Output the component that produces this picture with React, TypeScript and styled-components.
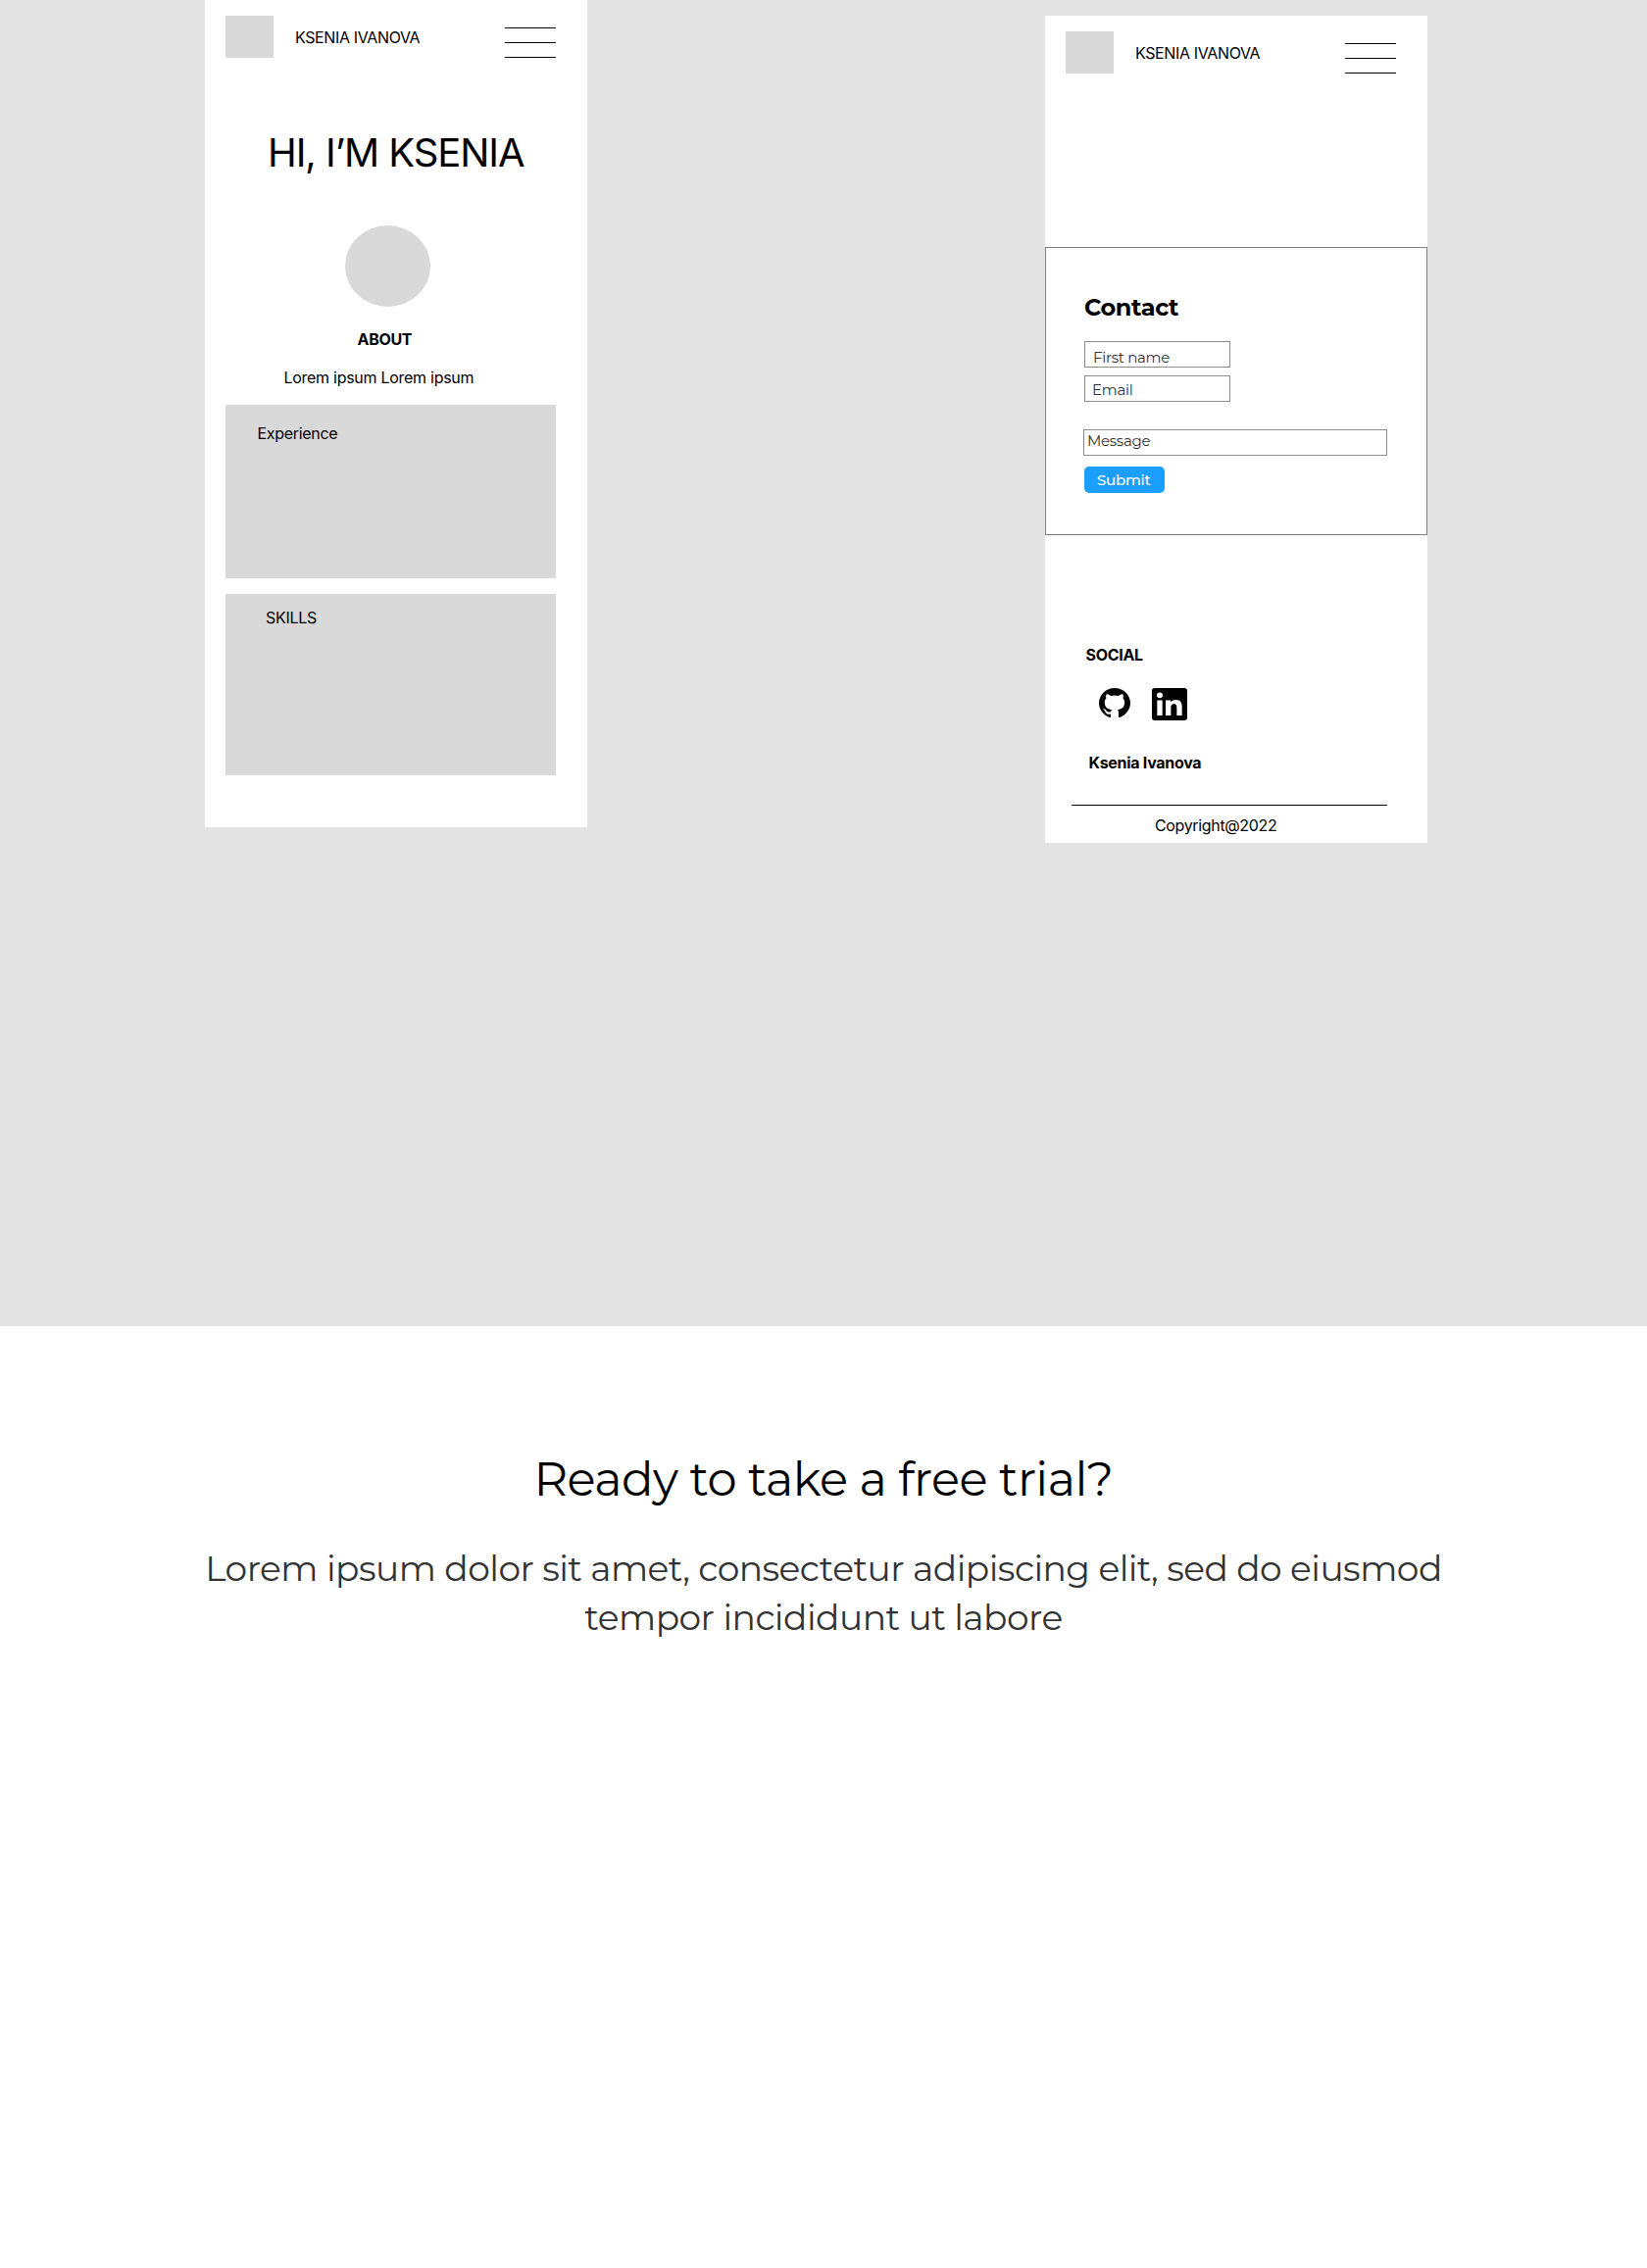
import React from "react";
import styled, { createGlobalStyle } from "styled-components";

const montserrat = `Montserrat, Inter, "Liberation Sans", sans-serif`;

const GlobalStyle = createGlobalStyle`
  *, *::before, *::after { box-sizing: border-box; }
  body {
    margin: 0;
    background: #ffffff;
    color: #000000;
    font-family: Inter, "Liberation Sans", sans-serif;
  }
  h1, h2, h3, p { margin: 0; font-weight: 400; }
`;

const Page = styled.main`
  width: 1680px;
  height: 2314px;
  display: flex;
  flex-direction: column;
  overflow: hidden;
`;

const Canvas = styled.section`
  display: flex;
  justify-content: space-between;
  align-items: flex-start;
  height: 1353px;
  padding: 0 224px 0 209px;
  background: #e4e4e4;
`;

const Board = styled.article<{ $top?: number }>`
  display: flex;
  flex-direction: column;
  align-items: flex-start;
  width: 390px;
  height: 844px;
  margin-top: ${(p) => p.$top ?? 0}px;
  background: #ffffff;
`;

const Header = styled.header`
  display: flex;
  align-items: flex-start;
  width: 100%;
  height: 59px;
  padding: 16px 32px 0 21px;
`;

const Logo = styled.div`
  width: 49px;
  height: 43px;
  background: #d9d9d9;
`;

const Burger = styled.div`
  display: flex;
  flex-direction: column;
  gap: 14px;
  width: 52px;
  margin: 12px 0 0 auto;
`;

const Bar = styled.span`
  height: 1px;
  background: #000000;
`;

const Text = styled.p<{ $top?: number; $left?: number; $bold?: boolean; $track?: number }>`
  margin: ${(p) => p.$top ?? 0}px 0 0 ${(p) => p.$left ?? 0}px;
  font-size: 16px;
  line-height: 19px;
  font-weight: ${(p) => (p.$bold ? 700 : 400)};
  letter-spacing: ${(p) => p.$track ?? -0.3}px;
  white-space: nowrap;
`;

const Title = styled.h1`
  margin: 73px 0 0 64px;
  font-size: 40px;
  line-height: 48px;
  letter-spacing: -1.07px;
  white-space: nowrap;
`;

const Portrait = styled.div`
  width: 87px;
  height: 83px;
  margin: 50px 0 0 143px;
  border-radius: 50%;
  background: #d9d9d9;
`;

const Panel = styled.section<{ $top: number; $height: number }>`
  display: flex;
  align-items: flex-start;
  width: 337px;
  height: ${(p) => p.$height}px;
  margin: ${(p) => p.$top}px 0 0 21px;
  background: #d9d9d9;
`;

const ContactBox = styled.form`
  display: flex;
  flex-direction: column;
  align-items: flex-start;
  width: 390px;
  height: 294px;
  margin-top: 177px;
  padding: 46px 0 0 39px;
  border: 1px solid #808080;
  font-family: ${montserrat};
`;

const ContactTitle = styled.h2`
  height: 29px;
  font-size: 24px;
  line-height: 29px;
  font-weight: 700;
  letter-spacing: -0.4px;
`;

const Field = styled.label<{ $top: number; $wide?: boolean; $x: number; $y: number }>`
  width: ${(p) => (p.$wide ? 310 : 149)}px;
  height: 27px;
  margin: ${(p) => p.$top}px 0 0 ${(p) => (p.$wide ? -1 : 0)}px;
  padding: ${(p) => p.$y}px 0 0 ${(p) => p.$x}px;
  border: 1px solid #8c8c8c;
  font-size: 15px;
  line-height: 19px;
  letter-spacing: -0.28px;
  color: #333333;
`;

const Submit = styled.button`
  width: 82px;
  height: 27px;
  margin: 11px 0 0;
  padding: 4px 0 4px 13px;
  border: 0;
  border-radius: 5px;
  background: #1a9fff;
  color: #ffffff;
  font: 500 15px/19px ${montserrat};
  letter-spacing: -0.24px;
  text-align: left;
`;

const Social = styled.div`
  display: flex;
  gap: 22px;
  margin: 24px 0 0 55px;
  height: 33px;
`;

const Rule = styled.hr`
  width: 322px;
  height: 1px;
  margin: 33px 0 0 27px;
  border: 0;
  background: #000000;
`;

const Trial = styled.section`
  display: flex;
  flex-direction: column;
  align-items: center;
  padding-top: 127px;
  font-family: ${montserrat};
  text-align: center;
`;

const TrialTitle = styled.h2`
  font-size: 48px;
  line-height: 58px;
  letter-spacing: -0.54px;
`;

const TrialText = styled.p`
  max-width: 1300px;
  margin-top: 37px;
  font-size: 36px;
  line-height: 50px;
  letter-spacing: -0.52px;
  color: #333333;
`;

const GithubIcon = () => (
  <svg width="32" height="30" viewBox="0 0.297 24 23.42" preserveAspectRatio="none" aria-label="GitHub">
    <path d="M12 .297c-6.63 0-12 5.373-12 12 0 5.303 3.438 9.8 8.205 11.385.6.113.82-.258.82-.577 0-.285-.01-1.04-.015-2.04-3.338.724-4.042-1.61-4.042-1.61C4.422 18.07 3.633 17.7 3.633 17.7c-1.087-.744.084-.729.084-.729 1.205.084 1.838 1.236 1.838 1.236 1.07 1.835 2.809 1.305 3.495.998.108-.776.417-1.305.76-1.605-2.665-.3-5.466-1.332-5.466-5.93 0-1.31.465-2.38 1.235-3.22-.135-.303-.54-1.523.105-3.176 0 0 1.005-.322 3.3 1.23.96-.267 1.98-.399 3-.405 1.02.006 2.04.138 3 .405 2.28-1.552 3.285-1.23 3.285-1.23.645 1.653.24 2.873.12 3.176.765.84 1.23 1.91 1.23 3.22 0 4.61-2.805 5.625-5.475 5.92.42.36.81 1.096.81 2.22 0 1.606-.015 2.896-.015 3.286 0 .315.21.69.825.57C20.565 22.092 24 17.592 24 12.297c0-6.627-5.373-12-12-12" />
  </svg>
);

const LinkedinIcon = () => (
  <svg width="36" height="33" viewBox="0 0 24 24" preserveAspectRatio="none" aria-label="LinkedIn">
    <path d="M20.447 20.452h-3.554v-5.569c0-1.328-.027-3.037-1.852-3.037-1.853 0-2.136 1.445-2.136 2.939v5.667H9.351V9h3.414v1.561h.046c.477-.9 1.637-1.85 3.37-1.85 3.601 0 4.267 2.37 4.267 5.455v6.286zM5.337 7.433c-1.144 0-2.063-.926-2.063-2.065 0-1.138.92-2.063 2.063-2.063 1.14 0 2.064.925 2.064 2.063 0 1.139-.925 2.065-2.064 2.065zm1.782 13.019H3.555V9h3.564v11.452zM22.225 0H1.771C.792 0 0 .774 0 1.729v20.542C0 23.227.792 24 1.771 24h20.451C23.2 24 24 23.227 24 22.271V1.729C24 .774 23.2 0 22.222 0h.003z" />
  </svg>
);

const BoardHeader = () => (
  <Header>
    <Logo />
    <Text $top={13} $left={22} $track={-0.37}>KSENIA IVANOVA</Text>
    <Burger>
      <Bar />
      <Bar />
      <Bar />
    </Burger>
  </Header>
);

export default function App() {
  return (
    <Page>
      <GlobalStyle />
      <Canvas>
        <Board>
          <BoardHeader />
          <Title>HI, I’M KSENIA</Title>
          <Portrait />
          <Text $bold $top={24} $left={155.5}>ABOUT</Text>
          <Text $top={20} $left={80.5} $track={-0.28}>Lorem ipsum Lorem ipsum</Text>
          <Panel $top={18} $height={177}>
            <Text $top={20} $left={32.5}>Experience</Text>
          </Panel>
          <Panel $top={16} $height={185}>
            <Text $top={15} $left={41}>SKILLS</Text>
          </Panel>
        </Board>
        <Board $top={16}>
          <BoardHeader />
          <ContactBox>
            <ContactTitle>Contact</ContactTitle>
            <Field $top={20} $x={8} $y={6}>First name</Field>
            <Field $top={8} $x={7} $y={4}>Email</Field>
            <Field $top={28} $x={3} $y={1} $wide>Message</Field>
            <Submit type="button">Submit</Submit>
          </ContactBox>
          <Text $bold $top={113} $left={41.5}>SOCIAL</Text>
          <Social>
            <GithubIcon />
            <LinkedinIcon />
          </Social>
          <Text $bold $top={34} $left={44.5}>Ksenia Ivanova</Text>
          <Rule />
          <Text $top={11} $left={112} $track={-0.35}>Copyright@2022</Text>
        </Board>
      </Canvas>
      <Trial>
        <TrialTitle>Ready to take a free trial?</TrialTitle>
        <TrialText>
          Lorem ipsum dolor sit amet, consectetur adipiscing elit, sed do eiusmod tempor incididunt ut labore
        </TrialText>
      </Trial>
    </Page>
  );
}
